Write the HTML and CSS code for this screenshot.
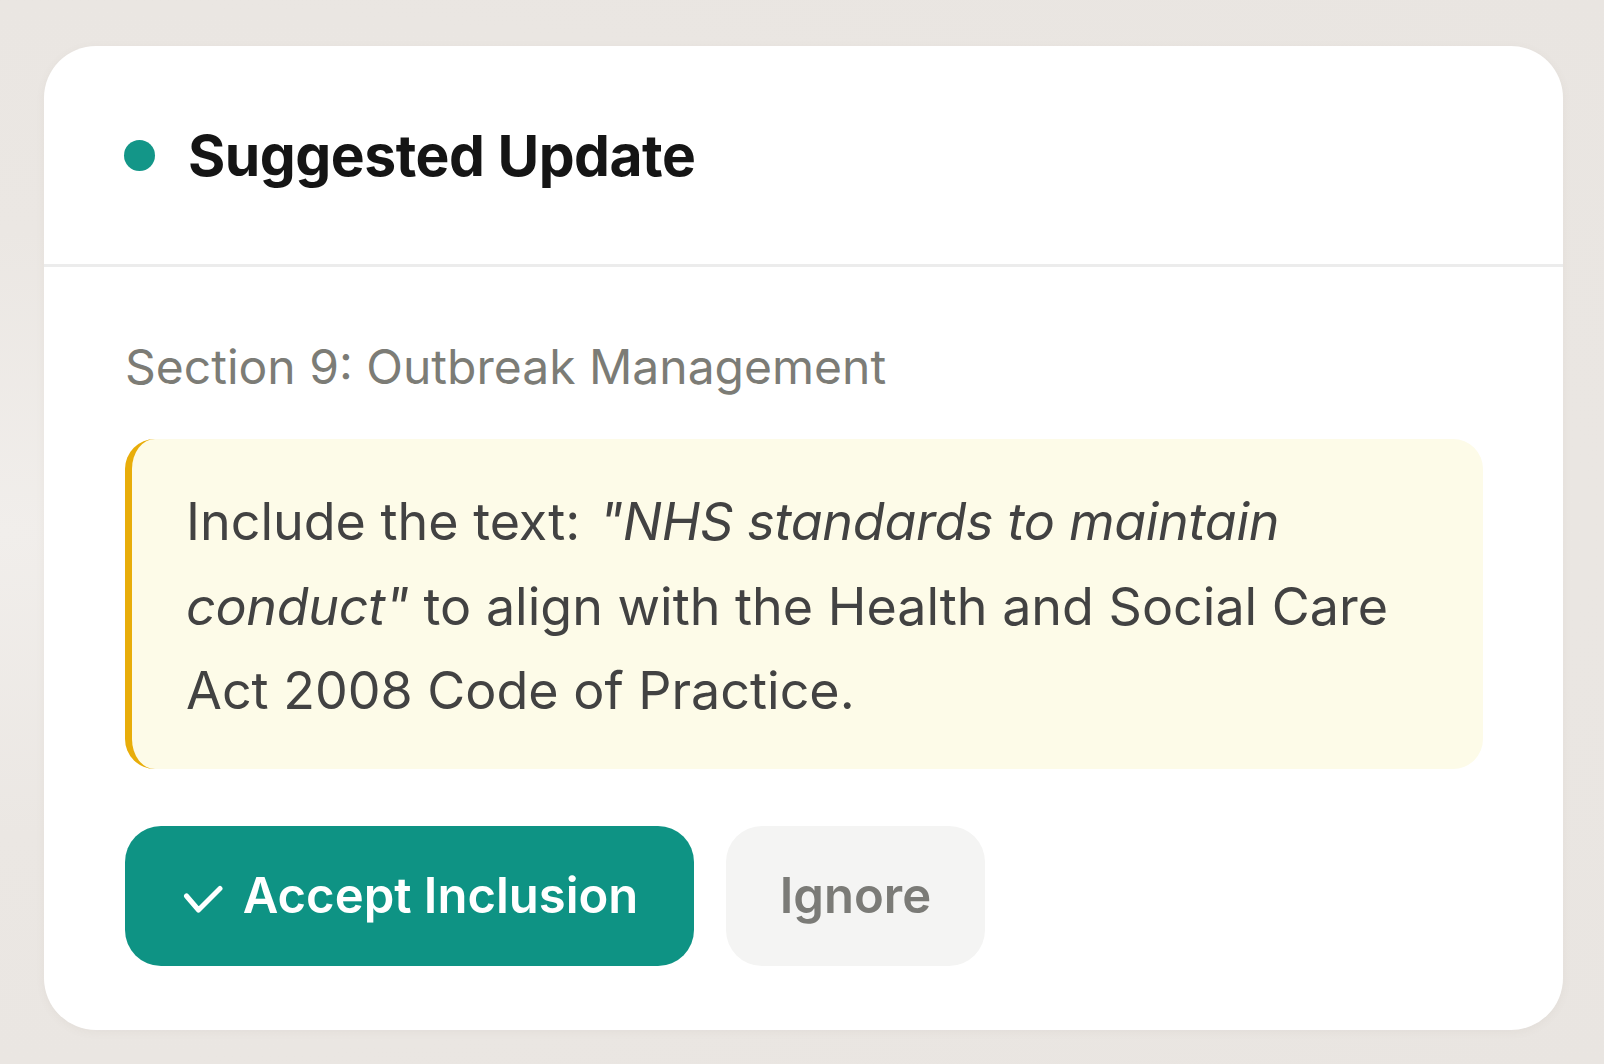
FILE: index.html
```html
<!DOCTYPE html>
<html lang="en">
<head>
<meta charset="utf-8">
<title>Suggested Update</title>
<link rel="stylesheet" href="styles.css">
</head>
<body>
<div class="page">
  <div class="card">
    <div class="card-header">
      <span class="dot"></span>
      <h1 class="title">Suggested Update</h1>
    </div>
    <div class="card-body">
      <div class="section-label">Section 9: Outbreak Management</div>
      <div class="suggestion">
        <p>Include the text: <em>"NHS standards to maintain conduct"</em> to align with the Health and Social Care Act 2008 Code of Practice.</p>
      </div>
      <div class="actions">
        <button class="btn btn-accept">
          <svg class="check" viewBox="0 0 40 30" width="40" height="30"><polyline points="3.5,11 15.5,25 37,3.5" fill="none" stroke="#fff" stroke-width="5" stroke-linecap="round" stroke-linejoin="round"/></svg>
          <span>Accept Inclusion</span>
        </button>
        <button class="btn btn-ignore">Ignore</button>
      </div>
    </div>
  </div>
</div>
</body>
</html>
```
FILE: styles.css
```css
html, body {
  margin: 0;
  padding: 0;
}
body {
  width: 1604px;
  height: 1064px;
  background: radial-gradient(ellipse at 0% 50%, #f1eeeb 0%, #ebe7e3 40%, #e9e5e1 100%);
  font-family: Inter, "Noto Sans", sans-serif;
  overflow: hidden;
}
.page {
  padding: 46px 41px 0 44px;
}
.card {
  background: #ffffff;
  border-radius: 52px;
  box-shadow: 0 2px 10px rgba(120, 100, 80, 0.06);
  overflow: hidden;
}
.card-header {
  display: flex;
  align-items: center;
  height: 218px;
  padding: 0 80px;
  border-bottom: 3px solid #ececec;
}
.dot {
  width: 31px;
  height: 31px;
  border-radius: 50%;
  background: #139688;
  flex: none;
  margin-right: 33px;
}
.title {
  margin: 0;
  font-size: 57px;
  font-weight: 700;
  color: #151515;
  letter-spacing: -0.5px;
}
.card-body {
  padding: 68px 80px 64px 81px;
}
.section-label {
  font-size: 48px;
  line-height: 64px;
  color: #7c7c76;
  margin-bottom: 40px;
}
.suggestion {
  background: #fdfbe8;
  border-left: 7px solid #e8ad0a;
  border-radius: 30px;
  padding: 41px 60px 35px 54px;
}
.suggestion p {
  margin: 0;
  font-size: 52px;
  line-height: 84.5px;
  color: #424242;
}
.suggestion em {
  font-style: italic;
  letter-spacing: -0.3px;
  margin-left: 4px;
}
.actions {
  display: flex;
  gap: 32px;
  margin-top: 57px;
}
.btn {
  font-family: inherit;
  border: none;
  height: 140px;
  border-radius: 36px;
  font-size: 49px;
  font-weight: 600;
  display: flex;
  align-items: center;
  justify-content: center;
  cursor: pointer;
}
.btn-accept {
  background: #0e9384;
  color: #ffffff;
  width: 569px;
  gap: 20px;
  padding-left: 8px;
}
.check {
  display: block;
  margin-top: 8px;
}
.btn-ignore {
  background: #f4f4f3;
  color: #7b7b77;
  width: 259px;
}
```
